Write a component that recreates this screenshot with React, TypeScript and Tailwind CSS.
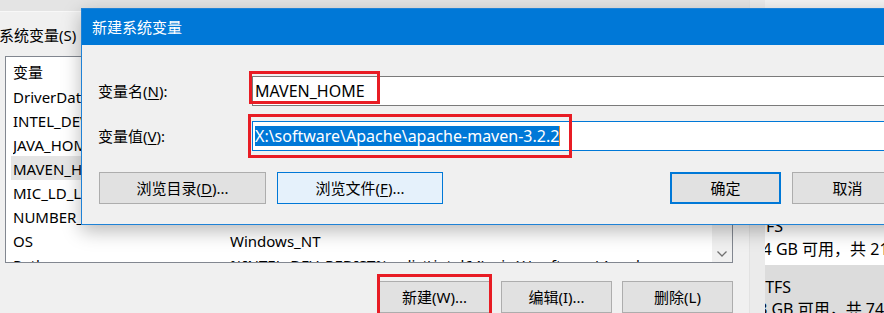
import React from "react";

const rows: { name: string; value: string; sel?: boolean }[] = [
  { name: "DriverData", value: "C:\\Windows\\System32\\Drivers\\DriverData" },
  { name: "INTEL_DEV_REDIST", value: "C:\\Program Files (x86)\\Common Files\\Intel\\" },
  { name: "JAVA_HOME", value: "C:\\Program Files\\Java\\jdk1.8.0_131" },
  { name: "MAVEN_HOME", value: "X:\\software\\Apache\\apache-maven-3.2.2", sel: true },
  { name: "MIC_LD_LIBRARY_PATH", value: "%INTEL_DEV_REDIST%compiler\\lib\\mic" },
  { name: "NUMBER_OF_PROCESSORS", value: "8" },
  { name: "OS", value: "Windows_NT" },
  { name: "Path", value: "%INTEL_DEV_REDIST%redist\\intel64\\mic;X:\\software\\Apache" },
];

function BgButton({ children, className = "" }: { children: React.ReactNode; className?: string }) {
  return (
    <div
      className={`w-[111px] h-[32px] shrink-0 flex items-center justify-center bg-[#e1e1e1] border border-[#adadad] text-[15px] ${className}`}
    >
      <span>{children}</span>
    </div>
  );
}

export default function App() {
  return (
    <div className="relative w-[884px] h-[313px] overflow-hidden bg-[#f0f0f0] text-black font-['Noto_Sans','Noto_Sans_CJK_SC',sans-serif]">
      {/* background windows */}
      <div className="flex h-full">
        <div className="w-[749px] shrink-0 flex flex-col">
          <div className="h-[12px] bg-[#e4e4e4] border-b border-[#f8f8f8]" />
          <div className="mt-[13px] h-[20px] leading-[20px] text-[15px] -ml-[1px] whitespace-nowrap">
            系统变量(S)
          </div>
          <div className="mt-[11px] ml-[5px] w-[728px] h-[207px] border border-[#828790] bg-white flex overflow-hidden">
            <div className="flex-1 flex flex-col text-[15px] whitespace-nowrap">
              <div className="h-[27px] shrink-0 flex items-center pl-[7px] pt-[4px]">
                <span className="w-[217px]">变量</span>
                <span>值</span>
              </div>
              {rows.map((r) => (
                <div key={r.name} className="h-[24px] shrink-0 flex">
                  <div
                    className={`ml-[5px] flex-1 flex items-center pl-[2px] pt-[3px] ${r.sel ? "bg-[#e5e5e5]" : ""}`}
                  >
                    <span className="w-[217px] overflow-hidden">{r.name}</span>
                    <span>{r.value}</span>
                  </div>
                </div>
              ))}
            </div>
            <div className="w-[20px] shrink-0 bg-[#f0f0f0] flex flex-col justify-end">
              <div className="h-[17px] flex items-center justify-center">
                <svg width="10" height="6" viewBox="0 0 10 6">
                  <polyline points="0.5,0.5 5,5 9.5,0.5" fill="none" stroke="#707070" strokeWidth="1.3" />
                </svg>
              </div>
            </div>
          </div>
          <div className="mt-[18px] flex pl-[379px]">
            <BgButton>新建(W)...</BgButton>
            <BgButton className="ml-[11px]">编辑(I)...</BgButton>
            <BgButton className="ml-[10px]">删除(L)</BgButton>
          </div>
        </div>
        <div className="w-[1px] bg-[#e2e2e2] shrink-0" />
        <div className="w-[15px] bg-[#ebebeb] shrink-0" />
        <div className="flex-1 flex flex-col overflow-hidden shadow-[inset_5px_0_5px_-3px_rgba(0,0,0,0.12)]">
          <div className="h-[8px] bg-[#f3f3f3]" />
          <div className="flex-1 bg-white flex flex-col justify-end pb-[4px] leading-[23px] text-[16px] whitespace-nowrap">
            <div className="-ml-[20px]">NTFS</div>
            <div className="-ml-[25px]">31.4 GB 可用，共 216 GB</div>
          </div>
          <div className="h-[48px] shrink-0 bg-[#dcdcdc] pt-[11px] leading-[22px] text-[16px] whitespace-nowrap">
            <div className="-ml-[12px]">NTFS</div>
            <div className="-ml-[16px]">53 GB 可用，共 74 GB</div>
          </div>
        </div>
      </div>

      {/* dialog window */}
      <div className="absolute left-[81px] top-[8px] w-[830px] h-[217px] border border-[#1f82d6] bg-[#f0f0f0] flex flex-col shadow-[0_6px_18px_rgba(0,0,0,0.28)]">
        <div className="h-[36px] shrink-0 bg-[#0078d7] flex items-center pl-[10px] text-white text-[15px]">
          新建系统变量
        </div>
        <div className="flex-1 flex flex-col pl-[16px] text-[15px]">
          <div className="mt-[31px] flex items-center">
            <div className="w-[154px] shrink-0">
              <span>
                变量名(<span className="underline underline-offset-2">N</span>):
              </span>
            </div>
            <div className="flex-1 h-[30px] bg-white border border-[#7a7a7a] flex items-center pl-[2px] text-[16px] whitespace-nowrap">
              MAVEN_HOME
            </div>
          </div>
          <div className="mt-[15px] flex items-center">
            <div className="w-[154px] shrink-0">
              <span>
                变量值(<span className="underline underline-offset-2">V</span>):
              </span>
            </div>
            <div className="flex-1 h-[30px] bg-white border border-[#0078d7] flex items-center pl-[2px] text-[16px] whitespace-nowrap">
              <span className="bg-[#0078d7] text-white leading-[20px]">
                {"X:\\software\\Apache\\apache-maven-3.2.2"}
              </span>
              <span className="w-[1px] h-[20px] bg-[#f08a24]" />
            </div>
          </div>
          <div className="mt-[21px] flex">
            <div className="ml-[1px] w-[167px] h-[32px] shrink-0 flex items-center justify-center bg-[#e1e1e1] border border-[#adadad]">
              <span>
                浏览目录(<span className="underline underline-offset-2">D</span>)...
              </span>
            </div>
            <div className="ml-[11px] w-[166px] h-[32px] shrink-0 flex items-center justify-center bg-[#e5f1fb] border border-[#0078d7]">
              <span>
                浏览文件(<span className="underline underline-offset-2">F</span>)...
              </span>
            </div>
            <div className="ml-[227px] w-[111px] h-[32px] shrink-0 flex items-center justify-center bg-[#e1e1e1] border-2 border-[#0078d7]">
              确定
            </div>
            <div className="ml-[11px] w-[111px] h-[32px] shrink-0 flex items-center justify-center bg-[#e1e1e1] border border-[#adadad]">
              取消
            </div>
          </div>
        </div>
      </div>

      {/* red annotation boxes */}
      <div className="absolute left-[249px] top-[71px] w-[131px] h-[33px] border-[3px] border-[#e81c24] pointer-events-none" />
      <div className="absolute left-[248px] top-[114px] w-[324px] h-[44px] border-[3px] border-[#e81c24] pointer-events-none" />
      <div className="absolute left-[377px] top-[274px] w-[115px] h-[50px] border-[3px] border-[#e81c24] pointer-events-none" />
    </div>
  );
}
